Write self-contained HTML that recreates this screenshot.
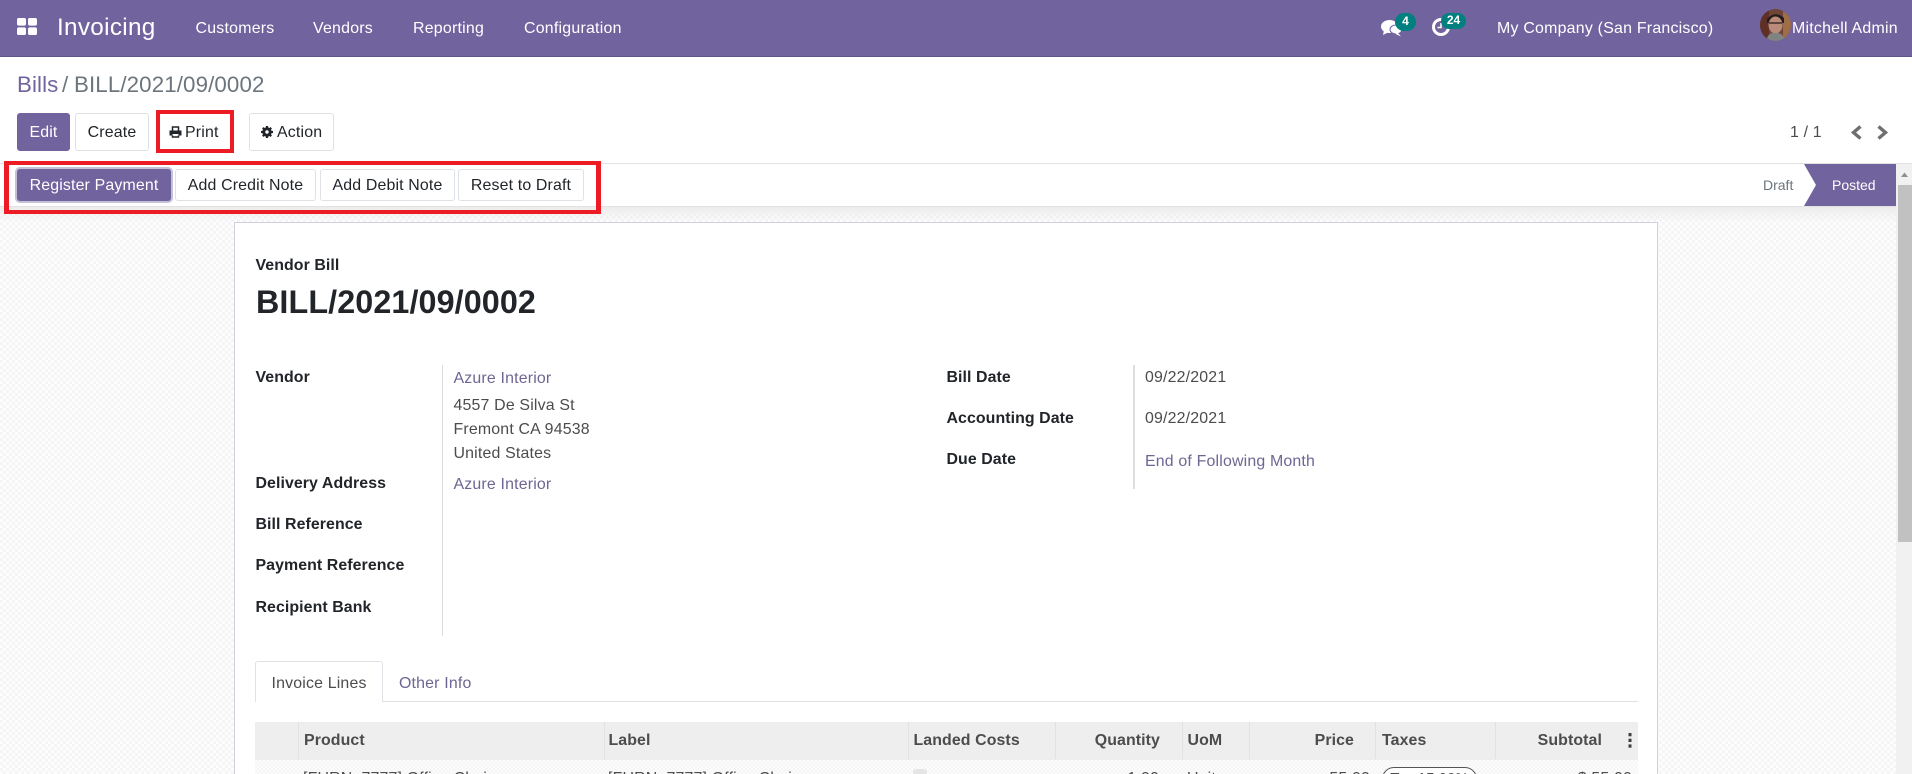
<!DOCTYPE html>
<html lang="en">
<head>
<meta charset="utf-8">
<title>Bills / BILL/2021/09/0002</title>
<style>
html,body{margin:0;padding:0;width:1912px;height:774px;overflow:hidden;background:#fff}
body{position:relative;font-family:"Liberation Sans",Arial,sans-serif;font-size:15.9px;color:#212529}
.a,.t,.b,.box{position:absolute}
.t{line-height:20px;height:20px;white-space:nowrap;letter-spacing:.18px}
.r{text-align:right}
.nav{left:0;top:0;width:1912px;height:56px;background:#71639e;border-bottom:1px solid #5f5389}
.n{color:#fff;letter-spacing:.24px}
.link{color:#6f6593}
.val{color:#4c4c4c}
.lbl{font-weight:700;color:#212529;letter-spacing:.08px}
.b{box-sizing:border-box;background:#fff;border:1px solid #dee2e6;border-radius:3px;color:#212529;text-align:center;white-space:nowrap;letter-spacing:.16px}
.b.p{background:#71639e;border-color:#71639e;color:#fff}
.red{border:4px solid #ed1c24;box-sizing:border-box}
.th{font-weight:700;color:#4c4c4c;letter-spacing:.1px}
.sep{top:722px;width:1px;height:37px;background:#e2e2e2}
</style>
</head>
<body>

<!-- Navbar -->
<div class="a nav"></div>
<svg class="a" style="left:17px;top:18px" width="20" height="17" viewBox="0 0 20 17"><g fill="#fff"><rect x="0" y="0" width="9" height="7.6" rx="1.8"/><rect x="11" y="0" width="9" height="7.6" rx="1.8"/><rect x="0" y="9.4" width="9" height="7.6" rx="1.8"/><rect x="11" y="9.4" width="9" height="7.6" rx="1.8"/></g></svg>
<div class="t n" style="left:57px;top:18px;font-size:24.3px;line-height:20px;letter-spacing:.3px">Invoicing</div>
<div class="t n" style="left:195.500px;top:19px">Customers</div>
<div class="t n" style="left:313px;top:19px">Vendors</div>
<div class="t n" style="left:413px;top:19px">Reporting</div>
<div class="t n" style="left:524px;top:19px">Configuration</div>

<!-- Systray -->
<svg class="a" style="left:1381px;top:19px" width="22" height="18" viewBox="0 0 22 18"><g fill="#fff"><ellipse cx="8.500" cy="7.500" rx="8.500" ry="6.500"/><path d="M3 11 L2 16 L8 13 Z"/><ellipse cx="15" cy="10.500" rx="6" ry="4.500" stroke="#71639e" stroke-width="1"/><path d="M17 14 L20 17.500 L14.500 15 Z"/></g></svg>
<div class="a" style="left:1395px;top:13px;width:21px;height:18px;border-radius:9px;background:#00807f;color:#fff;font-size:12px;font-weight:700;line-height:17px;text-align:center">4</div>
<svg class="a" style="left:1431px;top:17px" width="20" height="20" viewBox="0 0 20 20"><circle cx="10" cy="10" r="7.500" fill="none" stroke="#fff" stroke-width="3"/><path d="M10 6 V10.500 H6.500" fill="none" stroke="#fff" stroke-width="1.500"/></svg>
<div class="a" style="left:1441px;top:13px;width:25px;height:16px;border-radius:8px;background:#00807f;color:#fff;font-size:12px;font-weight:700;line-height:15px;text-align:center">24</div>
<div class="t n" style="left:1497px;top:19px">My Company (San Francisco)</div>
<svg class="a" style="left:1760px;top:9px" width="31" height="32" viewBox="0 0 31 32"><defs><clipPath id="av"><ellipse cx="15.500" cy="16" rx="15.500" ry="16"/></clipPath></defs><g clip-path="url(#av)"><rect width="31" height="32" fill="#6e4536"/><rect x="0" y="0" width="9" height="32" fill="#5e3026"/><rect x="23" y="0" width="8" height="32" fill="#a06d49"/><path d="M7 10 Q15 1 24 9 V14 H7 Z" fill="#241c1a"/><ellipse cx="15.500" cy="16" rx="7" ry="8.500" fill="#b98b78"/><rect x="9" y="13" width="13" height="2" fill="#5d4640"/><path d="M6 32 Q8 23 15.500 24 Q23 23 25 32 Z" fill="#7f8482"/></g></svg>
<div class="t n" style="left:1792px;top:19px">Mitchell Admin</div>

<!-- Breadcrumb -->
<div class="t" style="left:17px;top:75px;font-size:22.3px;color:#71639e;letter-spacing:.1px">Bills</div>
<div class="t" style="left:62px;top:75px;font-size:22.3px;color:#6c757d">/</div>
<div class="t" style="left:74px;top:75px;font-size:22.3px;color:#6c757d;letter-spacing:.12px">BILL/2021/09/0002</div>

<!-- Control panel buttons -->
<div class="b p" style="left:17px;top:113px;width:53px;height:38px;line-height:38px">Edit</div>
<div class="b" style="left:75px;top:113px;width:74px;height:38px;line-height:38px">Create</div>
<svg class="a" style="left:168.500px;top:126px;z-index:2" width="13" height="12" viewBox="0 0 13 12"><path d="M3.500 5 V1 H9.500 V5 M3.500 9 V11 H9.500 V9" fill="none" stroke="#212529" stroke-width="1.500"/><path d="M0.500 4.500 H12.500 V9.500 H0.500 Z" fill="#212529"/><rect x="3.500" y="8" width="6" height="1.500" fill="#fff"/></svg>
<div class="t" style="left:185px;top:123px">Print</div>
<div class="a red" style="left:156px;top:110px;width:78px;height:43px"></div>
<div class="b" style="left:249px;top:113px;width:85px;height:38px"></div>
<svg class="a" style="left:261px;top:125.500px" width="12" height="12" viewBox="0 0 12 12"><circle cx="6" cy="6" r="3.200" fill="none" stroke="#212529" stroke-width="3"/><g stroke="#212529" stroke-width="2.200"><path d="M6 0 V2.400 M6 9.600 V12 M0 6 H2.400 M9.600 6 H12 M1.800 1.800 L3.400 3.400 M8.600 8.600 L10.200 10.200 M1.800 10.200 L3.400 8.600 M8.600 3.400 L10.200 1.800"/></g></svg>
<div class="t" style="left:277px;top:123px">Action</div>

<!-- Pager -->
<div class="t val" style="left:1790px;top:123px">1 / 1</div>
<svg class="a" style="left:1850px;top:125px" width="13" height="15" viewBox="0 0 13 15"><path d="M10.500 1.500 L3.500 7.500 L10.500 13.500" fill="none" stroke="#6f6f6f" stroke-width="3.400"/></svg>
<svg class="a" style="left:1876px;top:125px" width="13" height="15" viewBox="0 0 13 15"><path d="M2.500 1.500 L9.500 7.500 L2.500 13.500" fill="none" stroke="#6f6f6f" stroke-width="3.400"/></svg>

<!-- Content background -->
<div class="a" style="left:0;top:207px;width:1896px;height:567px;background:repeating-conic-gradient(#f5f5f5 0 25%,#fdfdfd 0 50%) 0 0/6px 6px"></div>
<div class="a" style="left:0;top:207px;width:1896px;height:15px;background:linear-gradient(#ececec,rgba(240,240,240,0))"></div>

<!-- Statusbar -->
<div class="a" style="left:0;top:163px;width:1912px;height:44px;box-sizing:border-box;background:#fff;border-top:1px solid #e2e2e2;border-bottom:1px solid #e2e2e2"></div>
<div class="a" style="left:15px;top:167px;width:158px;height:36px;border-radius:5px;background:#c4c0d6"></div>
<div class="b p" style="left:17px;top:169px;width:154px;height:32px;line-height:32px">Register Payment</div>
<div class="b" style="left:175px;top:169px;width:141px;height:32px;line-height:32px">Add Credit Note</div>
<div class="b" style="left:320px;top:169px;width:135px;height:32px;line-height:32px">Add Debit Note</div>
<div class="b" style="left:458px;top:169px;width:126px;height:32px;line-height:32px">Reset to Draft</div>
<div class="a red" style="left:4px;top:161px;width:597px;height:53px;border-width:4px 5px"></div>
<div class="t" style="left:1763px;top:175px;font-size:14px;color:#6c757d;letter-spacing:0">Draft</div>
<svg class="a" style="left:1804px;top:164px" width="92" height="42" viewBox="0 0 92 42"><path d="M0 0 H92 V42 H0 L12 21 Z" fill="#71639e"/></svg>
<div class="t n" style="left:1832px;top:175px;font-size:14px;letter-spacing:0">Posted</div>

<!-- Scrollbar -->
<div class="a" style="left:1896px;top:164px;width:16px;height:610px;background:#f1f1f1"></div>
<div class="a" style="left:1898px;top:185px;width:14px;height:357px;background:#c1c1c1"></div>
<svg class="a" style="left:1900px;top:171px" width="9" height="7" viewBox="0 0 9 7"><path d="M1 6 L4.500 1.500 L8 6 Z" fill="#8f8f8f"/></svg>

<!-- Sheet -->
<div class="a" style="left:234px;top:222px;width:1424px;height:560px;box-sizing:border-box;background:#fff;border:1px solid #d2d0de"></div>

<div class="t lbl" style="left:255.500px;top:256px">Vendor Bill</div>
<div class="t lbl" style="left:256px;top:292px;font-size:32.300px;letter-spacing:.1px">BILL/2021/09/0002</div>

<div class="a" style="left:442px;top:365px;width:1px;height:271px;background:#dcdcdc"></div>
<div class="a" style="left:1133px;top:365px;width:1.500px;height:124px;background:#e0dce0"></div>

<div class="t lbl" style="left:255.500px;top:368px">Vendor</div>
<div class="t lbl" style="left:255.500px;top:474px">Delivery Address</div>
<div class="t lbl" style="left:255.500px;top:515px">Bill Reference</div>
<div class="t lbl" style="left:255.500px;top:556px">Payment Reference</div>
<div class="t lbl" style="left:255.500px;top:598px">Recipient Bank</div>

<div class="t link" style="left:453.500px;top:369px">Azure Interior</div>
<div class="t val" style="left:453.500px;top:396px">4557 De Silva St</div>
<div class="t val" style="left:453.500px;top:420px">Fremont CA 94538</div>
<div class="t val" style="left:453.500px;top:444px">United States</div>
<div class="t link" style="left:453.500px;top:475px">Azure Interior</div>

<div class="t lbl" style="left:946.500px;top:368px">Bill Date</div>
<div class="t lbl" style="left:946.500px;top:409px">Accounting Date</div>
<div class="t lbl" style="left:946.500px;top:450px">Due Date</div>
<div class="t val" style="left:1145px;top:368px">09/22/2021</div>
<div class="t val" style="left:1145px;top:409px">09/22/2021</div>
<div class="t link" style="left:1145px;top:452px">End of Following Month</div>

<!-- Tabs -->
<div class="a" style="left:255px;top:701px;width:1383px;height:1px;background:#dee2e6"></div>
<div class="a" style="left:255px;top:661px;width:128px;height:41px;box-sizing:border-box;background:#fff;border:1px solid #dee2e6;border-bottom:0;border-radius:3px 3px 0 0"></div>
<div class="t val" style="left:271.500px;top:674px">Invoice Lines</div>
<div class="t link" style="left:399px;top:674px">Other Info</div>

<!-- Table -->
<div class="a" style="left:255px;top:722px;width:1383px;height:38px;background:#eeeeee"></div>
<div class="a" style="left:255px;top:760px;width:1383px;height:14px;background:repeating-conic-gradient(#f6f6f6 0 25%,#fbfbfb 0 50%) 0 0/4px 4px"></div>
<div class="a sep" style="left:298px"></div>
<div class="a sep" style="left:604px"></div>
<div class="a sep" style="left:908px"></div>
<div class="a sep" style="left:1055px"></div>
<div class="a sep" style="left:1182px"></div>
<div class="a sep" style="left:1249px"></div>
<div class="a sep" style="left:1375px"></div>
<div class="a sep" style="left:1495px"></div>

<div class="t th" style="left:304px;top:731px">Product</div>
<div class="t th" style="left:608.500px;top:731px">Label</div>
<div class="t th" style="left:913.500px;top:731px">Landed Costs</div>
<div class="t th r" style="left:1060px;width:100px;top:731px">Quantity</div>
<div class="t th" style="left:1187.500px;top:731px">UoM</div>
<div class="t th r" style="left:1254px;width:100px;top:731px">Price</div>
<div class="t th" style="left:1382px;top:731px">Taxes</div>
<div class="t th r" style="left:1502px;width:100px;top:731px">Subtotal</div>
<svg class="a" style="left:1628px;top:733px" width="4" height="15" viewBox="0 0 4 15"><g fill="#3f3f3f"><rect x=".5" y="0" width="3" height="3.300"/><rect x=".5" y="5.700" width="3" height="3.300"/><rect x=".5" y="11.400" width="3" height="3.300"/></g></svg>

<div class="t val" style="left:303px;top:769px">[FURN_7777] Office Chair</div>
<div class="t val" style="left:608px;top:769px">[FURN_7777] Office Chair</div>
<div class="a" style="left:913px;top:769px;width:14px;height:14px;border-radius:3px;background:#e6e6e6"></div>
<div class="t val r" style="left:1059px;width:100px;top:769px">1.00</div>
<div class="t val" style="left:1187px;top:769px">Units</div>
<div class="t val r" style="left:1270px;width:100px;top:769px">55.00</div>
<div class="a" style="left:1382px;top:767px;width:95px;height:24px;box-sizing:border-box;border:1px solid #555;border-radius:12px;background:#fff;font-size:15px;line-height:21px;text-align:center;color:#4c4c4c;white-space:nowrap">Tax 15.00%</div>
<div class="t val r" style="left:1532px;width:100px;top:769px">$ 55.00</div>

</body>
</html>
